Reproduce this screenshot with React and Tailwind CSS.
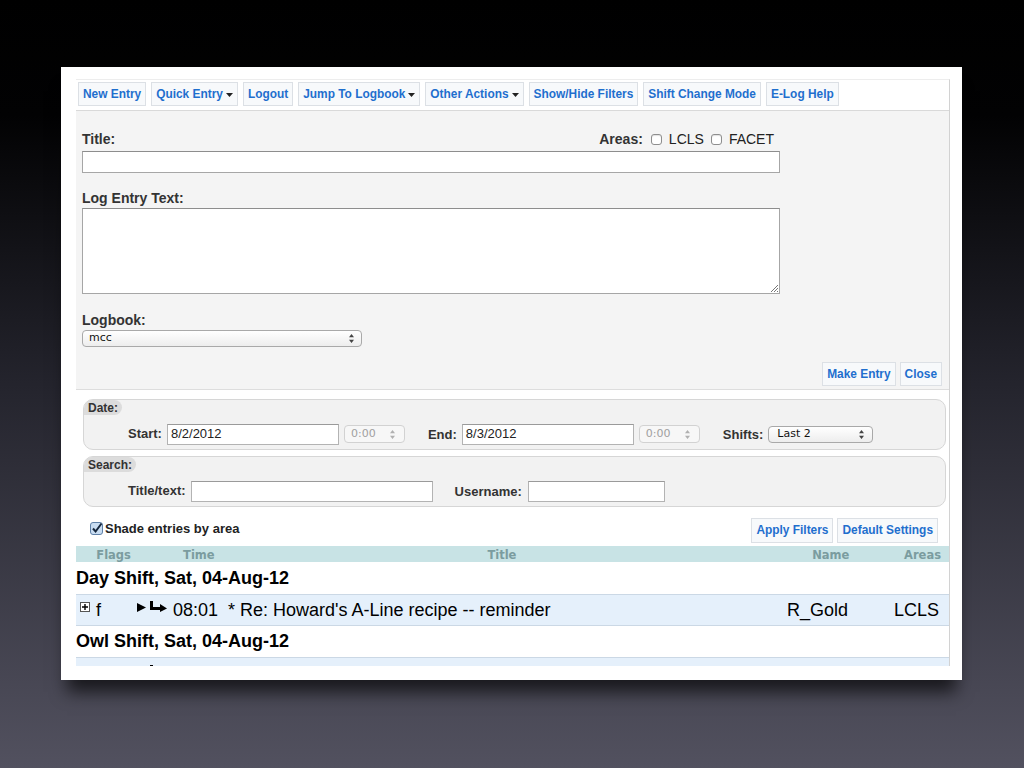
import React from "react";

const Caret = () => (
  <svg width="7" height="4" viewBox="0 0 7 4" className="ml-[3px]">
    <path d="M0 0h7L3.5 4z" fill="#222" />
  </svg>
);

const UpDown = ({ c = "#444" }) => (
  <svg width="5" height="9" viewBox="0 0 5 9">
    <path d="M2.5 0L5 3.2H0z M2.5 9L0 5.8h5z" fill={c} />
  </svg>
);

function Btn({ children, caret, h = "h-[24px]" }) {
  return (
    <div
      className={`${h} px-[4px] pt-[1px] flex items-center border border-[#dce0e5] bg-[#f7f9fb] text-[11.9px] font-bold text-[#1f6fce] whitespace-nowrap`}
    >
      {children}
      {caret && <Caret />}
    </div>
  );
}

const Box = () => (
  <span className="inline-block w-[11px] h-[11px] rounded-[3px] border border-[#8e8e8e] bg-white shadow-[inset_0_1px_1px_rgba(0,0,0,0.12)]" />
);

const Lbl = ({ children, cls = "" }) => (
  <span className={`text-[14px] font-bold text-[#333] leading-[18px] ${cls}`}>{children}</span>
);

const FLbl = ({ children }) => (
  <span className="text-[13px] font-bold text-[#333] whitespace-nowrap">{children}</span>
);

const FInput = ({ w, value }) => (
  <div
    className={`${w} h-[21px] bg-white border border-[#b3b3b3] border-t-[#9a9a9a] pl-[3px] flex items-center text-[13px] text-[#222]`}
  >
    {value}
  </div>
);

const TimeSel = () => (
  <div className="w-[61px] h-[18px] rounded-[4px] border border-[#d2d2d2] bg-[#f7f7f7] flex items-center justify-between pl-[6px] pr-[9px] text-[#a0a0a0] font-['DejaVu_Sans',sans-serif]">
    <span className="text-[11px]">0:00</span>
    <UpDown c="#b0b0b0" />
  </div>
);

const Legend = ({ children }) => (
  <div className="flex">
    <div className="flex h-[15px] items-center px-[4px] bg-[#dcdcdc] rounded-tl-[9px] rounded-tr-[8px] rounded-br-[8px] text-[12px] font-bold text-[#333]">
      {children}
    </div>
  </div>
);

const Plus = () => (
  <svg width="10" height="10" viewBox="0 0 10 10">
    <rect x="0.5" y="0.5" width="9" height="9" fill="#fff" stroke="#555" />
    <path d="M5 2v6M2 5h6" stroke="#000" strokeWidth="1.4" />
  </svg>
);

const Tri = () => (
  <svg width="9" height="9" viewBox="0 0 9 9">
    <path d="M0 0L9 4.5L0 9z" fill="#000" />
  </svg>
);

const Hook = () => (
  <svg width="17" height="11" viewBox="0 0 17 11">
    <path d="M0 0h3v6h8V9H0z" fill="#000" />
    <path d="M10 3L17 7.5L10 11z" fill="#000" />
  </svg>
);

function Glyphs() {
  return (
    <>
      <div className="w-[61px] flex items-center">
        <span className="ml-[4px] mb-[6px] flex">
          <Plus />
        </span>
        <span className="ml-[6px]">f</span>
      </div>
      <span className="mb-[6px] flex">
        <Tri />
      </span>
      <span className="ml-[4px] mb-[7px] flex">
        <Hook />
      </span>
    </>
  );
}

function EntryRow() {
  return (
    <div className="h-[32px] border-t border-b border-[#cbd8e5] bg-[#e5f0fb] flex items-center text-[18px] text-black shrink-0">
      <Glyphs />
      <span className="ml-[6px] w-[55px]">08:01</span>
      <span className="flex-1 whitespace-nowrap">* Re: Howard's A-Line recipe -- reminder</span>
      <span className="w-[107px]">R_Gold</span>
      <span className="w-[55px] text-right pr-[10px]">LCLS</span>
    </div>
  );
}

function PartialRow() {
  return (
    <div className="h-[32px] border-t border-[#cbd8e5] bg-[#e5f0fb] flex items-center text-[18px] text-transparent shrink-0">
      <div className="w-[61px] flex items-center">
        <span className="ml-[4px] mb-[6px] flex">
          <Plus />
        </span>
      </div>
      <span className="mb-[6px] flex">
        <Tri />
      </span>
      <span className="ml-[4px] mb-[7px] flex">
        <Hook />
      </span>
    </div>
  );
}

export default function App() {
  return (
    <div className="w-[1024px] h-[768px] overflow-hidden bg-[linear-gradient(180deg,#000_0%,#020203_15%,#24242d_50%,#52515f_100%)] pt-[67px] pl-[61px] font-['Liberation_Sans',Arial,sans-serif]">
      <div className="w-[901px] h-[613px] bg-white pl-[15px] pt-[12px] shadow-[0_18px_16px_-6px_rgba(0,0,0,0.65)]">
        <div className="w-[874px] h-[587px] overflow-hidden border-t border-r border-t-[#ededed] border-r-[#d2d2d2] flex flex-col">
          {/* toolbar */}
          <div className="h-[30px] shrink-0 pt-[2px] pl-[2px] flex gap-[5px]">
            <Btn>New Entry</Btn>
            <Btn caret>Quick Entry</Btn>
            <Btn>Logout</Btn>
            <Btn caret>Jump To Logbook</Btn>
            <Btn caret>Other Actions</Btn>
            <Btn>Show/Hide Filters</Btn>
            <Btn>Shift Change Mode</Btn>
            <Btn>E-Log Help</Btn>
          </div>

          {/* entry form */}
          <div className="shrink-0 bg-[#f4f4f4] border-t border-b border-t-[#d9d9d9] border-b-[#dddddd] pl-[6px] pr-[7px] pt-[19px] pb-[3px]">
            <div className="w-[698px]">
              <div className="flex items-center justify-between h-[18px]">
                <Lbl>Title:</Lbl>
                <div className="flex items-center pr-[6px] text-[14px] text-[#222]">
                  <Lbl>Areas:</Lbl>
                  <span className="ml-[8px] flex">
                    <Box />
                  </span>
                  <span className="ml-[7px]">LCLS</span>
                  <span className="ml-[7px] flex">
                    <Box />
                  </span>
                  <span className="ml-[7px]">FACET</span>
                </div>
              </div>
              <div className="mt-[3px] h-[22px] bg-white border border-[#a6a6a6] border-t-[#8d8d8d]" />
              <div className="mt-[16px] h-[18px] flex items-center">
                <Lbl>Log Entry Text:</Lbl>
              </div>
              <div className="relative mt-[1px] h-[86px] bg-white border border-[#a6a6a6] border-t-[#8d8d8d]">
                <svg width="8" height="8" viewBox="0 0 8 8" className="absolute right-[1px] bottom-[1px]">
                  <path d="M1 8L8 1M4 8L8 4M7 8L8 7" stroke="#777" strokeWidth="1" />
                </svg>
              </div>
              <div className="mt-[17px] h-[18px] flex items-center">
                <Lbl>Logbook:</Lbl>
              </div>
              <div className="mt-[1px] w-[280px] h-[17px] rounded-[4px] border border-[#a9a9a9] bg-[linear-gradient(180deg,#ffffff,#ededed)] flex items-center justify-between pl-[6px] pr-[7px]">
                <span className="text-[11px] text-[#111] font-['DejaVu_Sans',sans-serif]">mcc</span>
                <UpDown />
              </div>
            </div>
            <div className="mt-[15px] flex justify-end gap-[4px]">
              <Btn>Make Entry</Btn>
              <Btn>Close</Btn>
            </div>
          </div>

          {/* filters */}
          <div className="shrink-0 mt-[9px] ml-[7px] mr-[3px] flex flex-col gap-[6px]">
            <div className="h-[51px] rounded-[10px] border border-[#d6d6d6] bg-[#f2f2f2]">
              <Legend>Date:</Legend>
              <div className="mt-[7px] pl-[44px] flex items-center">
                <FLbl>Start:</FLbl>
                <span className="ml-[5px]">
                  <FInput w="w-[172px]" value="8/2/2012" />
                </span>
                <span className="ml-[5px]">
                  <TimeSel />
                </span>
                <span className="ml-[23px]">
                  <FLbl>End:</FLbl>
                </span>
                <span className="ml-[5px]">
                  <FInput w="w-[172px]" value="8/3/2012" />
                </span>
                <span className="ml-[5px]">
                  <TimeSel />
                </span>
                <span className="ml-[23px]">
                  <FLbl>Shifts:</FLbl>
                </span>
                <div className="ml-[5px] w-[105px] h-[17px] rounded-[4px] border border-[#a9a9a9] bg-[linear-gradient(180deg,#ffffff,#ededed)] flex items-center justify-between pl-[8px] pr-[8px]">
                  <span className="text-[11px] text-[#111] font-['DejaVu_Sans',sans-serif]">Last 2</span>
                  <UpDown />
                </div>
              </div>
            </div>
            <div className="h-[51px] rounded-[10px] border border-[#d6d6d6] bg-[#f2f2f2]">
              <Legend>Search:</Legend>
              <div className="mt-[7px] pl-[44px] flex items-center">
                <FLbl>Title/text:</FLbl>
                <span className="ml-[5px]">
                  <FInput w="w-[242px]" value="" />
                </span>
                <span className="ml-[22px]">
                  <FLbl>Username:</FLbl>
                </span>
                <span className="ml-[6px]">
                  <FInput w="w-[137px]" value="" />
                </span>
              </div>
            </div>
          </div>

          {/* shade + apply */}
          <div className="shrink-0 mt-[11px] h-[25px] pl-[14px] pr-[11px] flex items-start justify-between">
            <div className="flex items-center mt-[1px]">
              <svg width="13" height="13" viewBox="0 0 13 13">
                <rect x="0.5" y="0.5" width="12" height="12" rx="2.5" fill="#c9ddf2" stroke="#5f81a8" />
                <path d="M3 6.5l2.6 3L11.5 1.5" stroke="#16273d" strokeWidth="2" fill="none" />
              </svg>
              <span className="ml-[2px] text-[13px] font-bold text-[#222]">Shade entries by area</span>
            </div>
            <div className="flex gap-[4px]">
              <Btn h="h-[25px]">Apply Filters</Btn>
              <Btn h="h-[25px]">Default Settings</Btn>
            </div>
          </div>

          {/* table header */}
          <div className="shrink-0 mt-[3px] h-[16px] pt-[3px] bg-[#c8e3e5] flex items-center text-[11.5px] font-bold text-[#7b9c9f] font-['DejaVu_Sans',sans-serif] leading-none">
            <span className="w-[76px] text-center">Flags</span>
            <span className="w-[96px] text-center">Time</span>
            <span className="w-[516px] text-center">Title</span>
            <span className="w-[148px] text-center">Name</span>
            <span className="flex-1 flex justify-end pr-[8px] whitespace-nowrap">Areas</span>
          </div>

          <div className="shrink-0 h-[32px] flex items-center text-[18px] font-bold text-black">
            Day Shift, Sat, 04-Aug-12
          </div>
          <EntryRow />
          <div className="shrink-0 h-[31px] flex items-center text-[18px] font-bold text-black">
            Owl Shift, Sat, 04-Aug-12
          </div>
          <PartialRow />
        </div>
      </div>
    </div>
  );
}
